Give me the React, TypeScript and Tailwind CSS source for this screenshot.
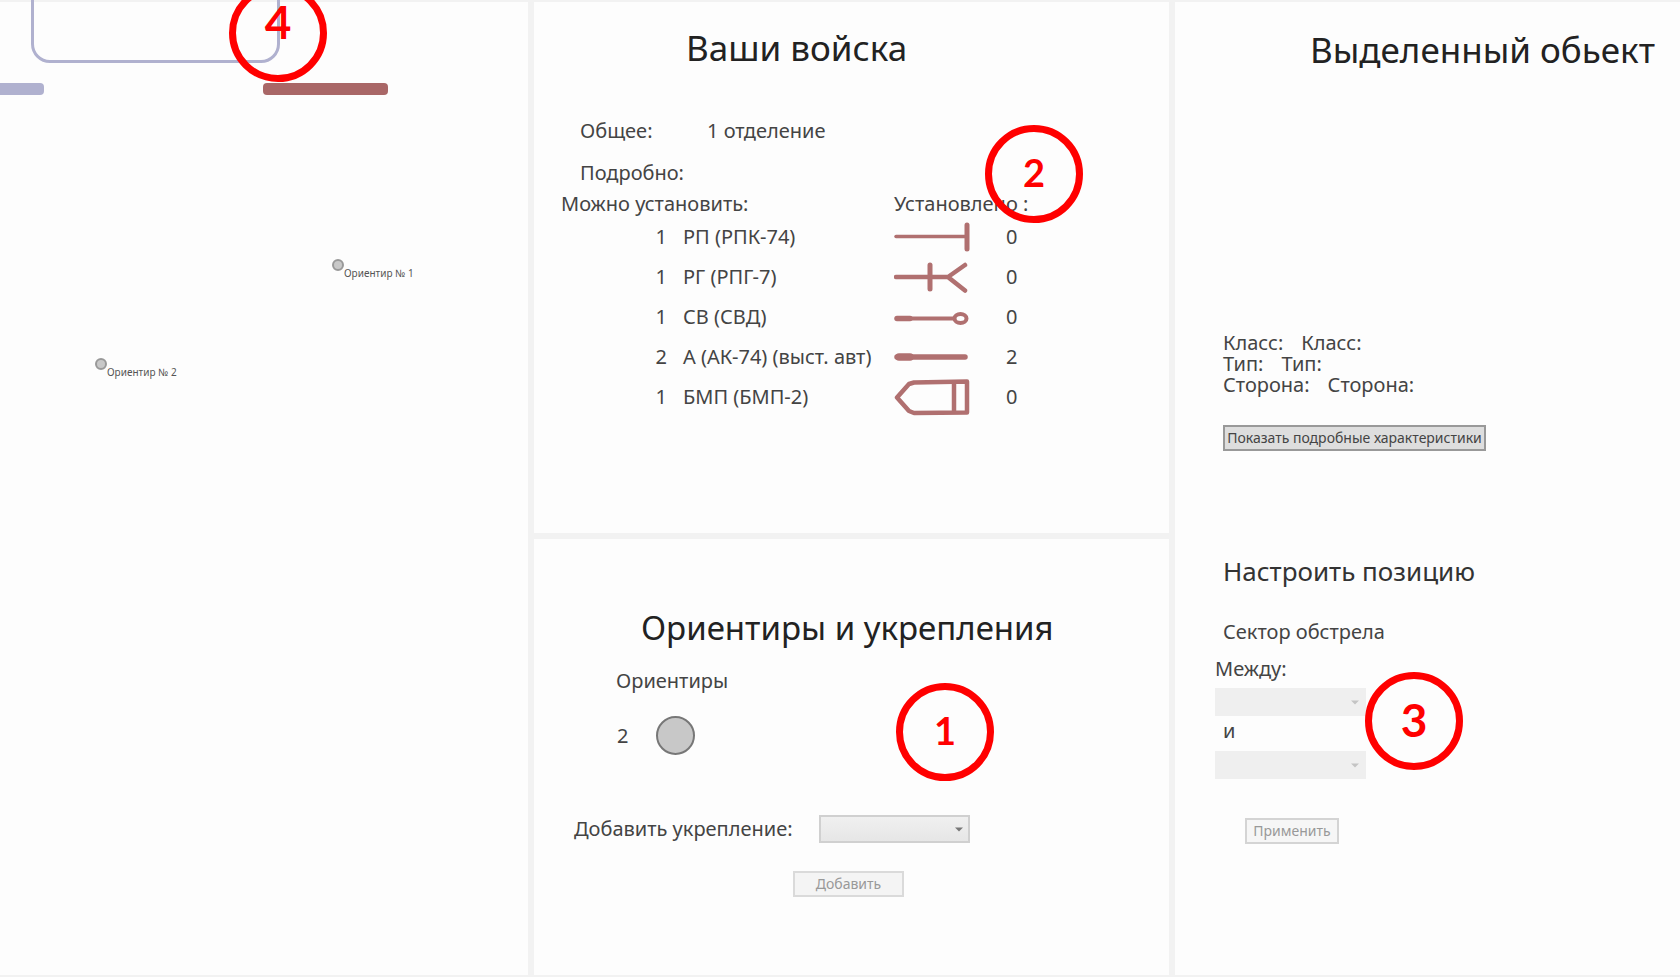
import type { ReactNode } from "react";

function Badge({ children, className }: { children: ReactNode; className: string }) {
  return (
    <div
      className={`absolute flex h-[98px] w-[98px] justify-center rounded-full border-[7px] border-[#ff0000] font-['Lato',sans-serif] font-bold text-[#ff0000] ${className}`}
    >
      {children}
    </div>
  );
}

function Arrow({ className }: { className: string }) {
  return (
    <svg viewBox="0 0 8 5" className={`pointer-events-none absolute right-[7px] top-[12px] h-[5px] w-[8px] ${className}`} aria-hidden="true">
      <path d="M0 0.5h8L4 4.5z" fill="currentColor" />
    </svg>
  );
}

const ink = "#b07070";

function MachineGun() {
  return (
    <svg width="76" height="40" viewBox="0 1 76 40" stroke={ink} strokeLinecap="round" fill="none">
      <path d="M2 20.5H72" strokeWidth="3.5" />
      <path d="M73 9V33" strokeWidth="5" />
    </svg>
  );
}

function Launcher() {
  return (
    <svg width="76" height="40" viewBox="0 1 76 40" stroke={ink} strokeWidth="4.5" strokeLinecap="round" fill="none">
      <path d="M2 21H54M71 9L54 21L71 34.5" />
      <path d="M36 9V33" strokeWidth="5" />
    </svg>
  );
}

function Sniper() {
  return (
    <svg width="76" height="40" viewBox="0 1 76 40" stroke={ink} strokeLinecap="round" fill="none">
      <path d="M3 22.5H60" strokeWidth="4" />
      <path d="M3 22.5H8L16 22.5" strokeWidth="5.5" />
      <ellipse cx="66.5" cy="22.5" rx="6" ry="4.5" strokeWidth="4" />
    </svg>
  );
}

function Rifle() {
  return (
    <svg width="76" height="40" viewBox="0 1 76 40" stroke={ink} strokeLinecap="round" fill="none">
      <path d="M3 21H71" strokeWidth="5.5" />
      <path d="M5 21H16" strokeWidth="7.5" />
    </svg>
  );
}

function Vehicle() {
  return (
    <svg width="76" height="40" viewBox="0 1 76 40" stroke={ink} strokeWidth="4.5" strokeLinejoin="round" fill="none">
      <path d="M3 21.5L15 8L20 6.5L73 5.5V36.5L20 37L15 35Z" />
      <path d="M60 6V36.5" />
    </svg>
  );
}

const units = [
  { free: 1, name: "РП (РПК-74)", symbol: <MachineGun />, placed: 0 },
  { free: 1, name: "РГ (РПГ-7)", symbol: <Launcher />, placed: 0 },
  { free: 1, name: "СВ (СВД)", symbol: <Sniper />, placed: 0 },
  { free: 2, name: "А (АК-74) (выст. авт)", symbol: <Rifle />, placed: 2 },
  { free: 1, name: "БМП (БМП-2)", symbol: <Vehicle />, placed: 0 },
];

function MapPanel() {
  return (
    <section aria-label="Карта" className="relative row-span-2 bg-[#fdfdfd]">
      <div className="absolute -top-8 left-[31px] h-[93px] w-[249px] rounded-[19px] border-[3px] border-[#b0b1cf]" />
      <div className="absolute left-0 top-[81px] h-[12px] w-[44px] rounded-r-sm bg-[#b0b1cf]" />
      <div className="absolute left-[263px] top-[81px] h-[12px] w-[125px] rounded-sm bg-[#a96767]" />
      <div className="absolute left-[332px] top-[257px] flex text-[10px] leading-[12px] text-[#555]">
        <span className="h-[12px] w-[12px] rounded-full border-2 border-[#999] bg-[#c8c8c8]" />
        <span className="mt-[8px] whitespace-nowrap">Ориентир № 1</span>
      </div>
      <div className="absolute left-[95px] top-[356px] flex text-[10px] leading-[12px] text-[#555]">
        <span className="h-[12px] w-[12px] rounded-full border-2 border-[#999] bg-[#c8c8c8]" />
        <span className="mt-[8px] whitespace-nowrap">Ориентир № 2</span>
      </div>
      <Badge className="-top-[18px] left-[229px] pt-[8px] text-[46px] leading-[46px]">4</Badge>
    </section>
  );
}

function TroopsPanel() {
  return (
    <section className="relative bg-[#fdfdfd] pt-[22px]">
      <h1 className="pl-[152px] text-[35px] leading-[48px] text-[#222]">Ваши войска</h1>
      <dl className="mt-[45px] pl-[46px]">
        <div className="flex">
          <dt className="w-[127px]">Общее:</dt>
          <dd>1 отделение</dd>
        </div>
        <dt className="mt-[14px]">Подробно:</dt>
      </dl>
      <table className="ml-[27px] mt-[3px] table-fixed border-collapse">
        <colgroup>
          <col className="w-[122px]" />
          <col className="w-[211px]" />
          <col className="w-[112px]" />
          <col className="w-[40px]" />
        </colgroup>
        <thead>
          <tr className="text-left leading-[27px]">
            <th colSpan={2} className="p-0 font-normal">Можно установить:</th>
            <th colSpan={2} className="whitespace-nowrap p-0 font-normal">Установлено :</th>
          </tr>
        </thead>
        <tbody>
          {units.map((u) => (
            <tr key={u.name} className="h-10">
              <td className="p-0 pr-[16px] text-right">{u.free}</td>
              <td className="whitespace-nowrap p-0">{u.name}</td>
              <td className="p-0 [&>svg]:block">{u.symbol}</td>
              <td className="p-0">{u.placed}</td>
            </tr>
          ))}
        </tbody>
      </table>
      <Badge className="left-[451px] top-[123px] pt-[21px] text-[38px] leading-[38px]">2</Badge>
    </section>
  );
}

function LandmarksPanel() {
  return (
    <section className="relative bg-[#fdfdfd] pt-[65px]">
      <h2 className="pl-[107px] text-[33px] leading-[48px] text-[#222]">Ориентиры и укрепления</h2>
      <h3 className="mt-[15px] pl-[82px]">Ориентиры</h3>
      <div className="mt-[21px] flex items-center gap-[28px] pl-[83px]">
        <span>2</span>
        <span className="h-[39px] w-[39px] rounded-full border-2 border-[#777] bg-[#c8c8c8]" />
      </div>
      <div className="mt-[60px] flex items-center pl-[40px]">
        <label htmlFor="fort" className="w-[245px] whitespace-nowrap">Добавить укрепление:</label>
        <div className="relative">
          <select id="fort" className="block h-[28px] w-[151px] appearance-none border-2 border-[#d0d0d0] bg-linear-to-b from-[#f0f0f0] to-[#e6e6e6]" />
          <Arrow className="text-[#777]" />
        </div>
      </div>
      <button type="button" disabled className="ml-[259px] mt-[28px] block h-[26px] w-[111px] border-2 border-[#dadada] bg-[#f4f4f4] text-[14px] leading-[22px] text-[#999]">
        Добавить
      </button>
      <Badge className="left-[362px] top-[144px] pt-[21px] text-[38px] leading-[38px]">1</Badge>
    </section>
  );
}

function SelectedPanel() {
  return (
    <section className="relative col-start-3 row-span-2 row-start-1 overflow-hidden bg-[#fdfdfd] pl-[48px] pt-[24px]">
      <h1 className="whitespace-nowrap pl-[87px] text-[35px] leading-[48px] text-[#222]">Выделенный обьект</h1>
      <div className="mt-[258px] leading-[21px]">
        <p className="flex gap-[18px]"><span>Класс:</span><span>Класс:</span></p>
        <p className="flex gap-[18px]"><span>Тип:</span><span>Тип:</span></p>
        <p className="flex gap-[18px]"><span>Сторона:</span><span>Сторона:</span></p>
      </div>
      <button type="button" className="mt-[30px] flex h-[26px] w-[263px] items-center justify-center whitespace-nowrap border-2 border-[#999] bg-[#dedede] text-[14px] text-[#444]">
        Показать подробные характеристики
      </button>
      <h2 className="mt-[101px] text-[26px] leading-[38px] text-[#333]">Настроить позицию</h2>
      <h3 className="mt-[28px]">Сектор обстрела</h3>
      <div className="-ml-[8px] mt-[9px]">
        <label htmlFor="from" className="block">Между:</label>
        <div className="relative mt-[5px] w-[151px]">
          <select id="from" disabled className="block h-[28px] w-full appearance-none bg-[#efefef]" />
          <Arrow className="text-[#c4c4c4]" />
        </div>
        <label htmlFor="to" className="mt-px block pl-[8px]">и</label>
        <div className="relative mt-[6px] w-[151px]">
          <select id="to" disabled className="block h-[28px] w-full appearance-none bg-[#efefef]" />
          <Arrow className="text-[#c4c4c4]" />
        </div>
      </div>
      <button type="button" disabled className="ml-[22px] mt-[39px] block h-[26px] w-[94px] border-2 border-[#d4d4d4] bg-[#f6f6f6] text-[14px] leading-[22px] text-[#999]">
        Применить
      </button>
      <Badge className="left-[190px] top-[670px] pt-[18px] text-[46px] leading-[46px]">3</Badge>
    </section>
  );
}

export default function App() {
  return (
    <main className="grid min-h-screen grid-cols-[528fr_635fr_505fr] grid-rows-[531fr_436fr] gap-[6px] bg-[#f2f2f2] py-[2px] font-['Noto_Sans',sans-serif] text-[20px] leading-[28px] text-[#444]">
      <MapPanel />
      <TroopsPanel />
      <LandmarksPanel />
      <SelectedPanel />
    </main>
  );
}
